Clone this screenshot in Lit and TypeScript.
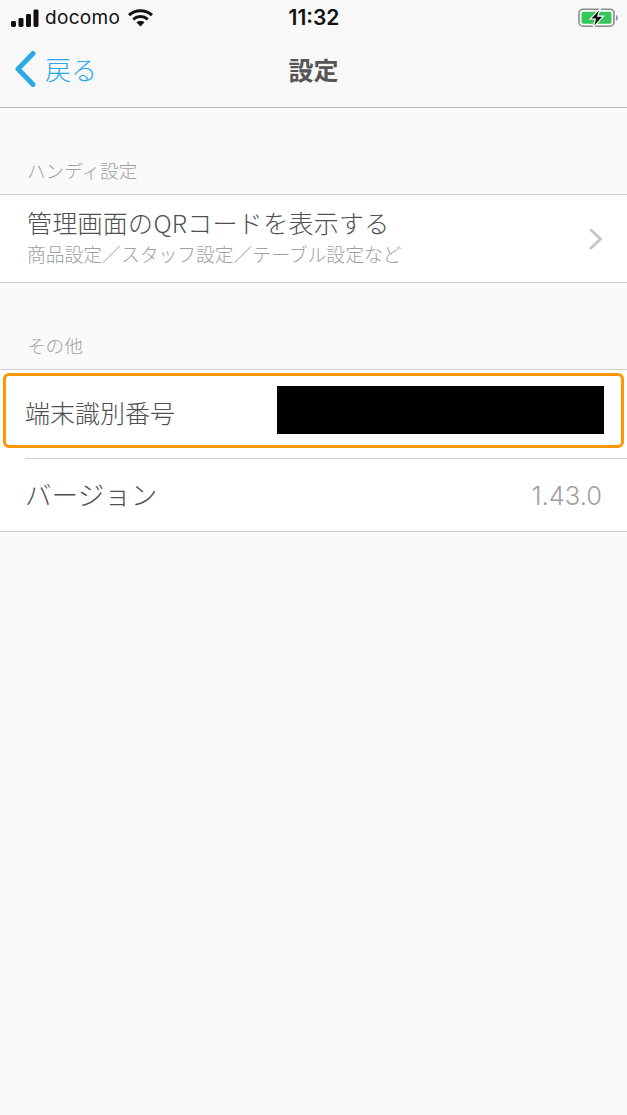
import { LitElement, html, css } from "lit";
import { customElement } from "lit/decorators.js";

@customElement("app-root")
export class AppRoot extends LitElement {
  static styles = css`
    :host {
      display: block;
      width: 627px;
      height: 1115px;
      background: #fafafa;
      overflow: hidden;
      font-family: "Noto Sans CJK JP", "Noto Sans", sans-serif;
      color: #555;
    }
    .header {
      height: 108px;
      box-sizing: border-box;
      background: #f8f8f9;
      border-bottom: 1px solid #bcbcbc;
      display: flex;
      flex-direction: column;
    }
    .status {
      height: 34px;
      flex: none;
      display: grid;
      grid-template-columns: 1fr auto 1fr;
      align-items: center;
      padding: 0 8px 0 11px;
      color: #111;
    }
    .status-left {
      display: flex;
      align-items: center;
      gap: 6px;
    }
    .carrier {
      font-family: "Inter", "Liberation Sans", sans-serif;
      font-size: 19px;
      line-height: 36px;
      letter-spacing: 0.3px;
    }
    .wifi {
      margin-left: 2px;
    }
    .clock {
      font-family: "Inter", "Liberation Sans", sans-serif;
      font-size: 21px;
      font-weight: 600;
      line-height: 34px;
      margin-left: -2px;
    }
    .status-right {
      display: flex;
      justify-content: flex-end;
    }
    .nav {
      flex: 1;
      display: grid;
      grid-template-columns: 1fr auto 1fr;
      align-items: center;
      padding: 0 15px 4px 15px;
    }
    .back {
      display: flex;
      align-items: center;
      gap: 9px;
      color: #2aa9ea;
      font-size: 26px;
      font-weight: 300;
      line-height: 36px;
    }
    .title {
      font-size: 25px;
      font-weight: 700;
      color: #555;
      line-height: 36px;
    }
    .section-label {
      height: 86px;
      box-sizing: border-box;
      display: flex;
      align-items: flex-end;
      padding: 0 0 12px 27px;
      font-size: 18.6px;
      font-weight: 300;
      line-height: 24px;
      color: #a0a0a0;
    }
    .group {
      background: #fff;
      border-top: 1px solid #cfcfcf;
      border-bottom: 1px solid #cfcfcf;
    }
    .qr {
      height: 87px;
      display: flex;
      align-items: center;
      justify-content: space-between;
      padding: 0 24px 0 27px;
    }
    .qr-title {
      font-size: 25px;
      font-weight: 300;
      line-height: 32px;
      letter-spacing: 0.28px;
      color: #4f4f4f;
      margin-top: -6px;
    }
    .qr-sub {
      font-size: 18.8px;
      font-weight: 300;
      line-height: 24px;
      color: #a0a0a0;
      margin-top: 4px;
    }
    .row {
      display: flex;
      align-items: center;
      justify-content: space-between;
      box-sizing: border-box;
      font-size: 25px;
      font-weight: 300;
      color: #4f4f4f;
    }
    .device {
      height: 88px;
      padding: 0 26px 0 25px;
      position: relative;
    }
    .highlight {
      position: absolute;
      left: 3px;
      right: 3px;
      top: 3px;
      height: 75px;
      border: 3px solid #ff9800;
      border-radius: 6px;
      box-sizing: border-box;
      pointer-events: none;
    }
    .mask {
      width: 327px;
      height: 48px;
      background: #000;
      margin-right: -3px;
      margin-top: -9px;
    }
    .device-label {
      margin-top: -5px;
    }
    .divider {
      height: 1px;
      margin-left: 25px;
      background: #cfcfcf;
    }
    .version {
      height: 72px;
      padding: 0 25px 0 25px;
    }
    .version-label {
      font-size: 26.6px;
      margin-top: -4px;
    }
    .version-value {
      font-family: "Inter", "Liberation Sans", sans-serif;
      font-size: 25.5px;
      font-weight: 300;
      color: #a0a0a0;
    }
  `;

  render() {
    return html`
      <div class="header">
        <div class="status">
          <div class="status-left">
            <svg width="28" height="18" viewBox="0 0 28 18">
              <rect x="0" y="12" width="5" height="6" rx="1.4" fill="#111" />
              <rect x="7.5" y="9" width="5" height="9" rx="1.4" fill="#111" />
              <rect x="15" y="5" width="5" height="13" rx="1.4" fill="#111" />
              <rect x="22.5" y="0.5" width="5" height="17.5" rx="1.4" fill="#111" />
            </svg>
            <span class="carrier">docomo</span>
            <svg class="wifi" width="25" height="18" viewBox="0 0 25 18">
              <path d="M1 6.2C7.4 0.4 17.6 0.4 24 6.2" fill="none" stroke="#111" stroke-width="3" />
              <path d="M5.2 10.3C9.4 6.6 15.6 6.6 19.8 10.3" fill="none" stroke="#111" stroke-width="3" />
              <path d="M12.5 17.5L8.4 13.3C10.6 11.5 14.4 11.5 16.6 13.3Z" fill="#111" />
            </svg>
          </div>
          <div class="clock">11:32</div>
          <div class="status-right">
            <svg width="41" height="20" viewBox="0 0 41 20">
              <rect x="1" y="1.200" width="35" height="17" rx="4" fill="none" stroke="#8c8c8c" stroke-width="1.6" />
              <rect x="3.500" y="3.700" width="30" height="12" rx="2" fill="#35c75a" />
              <path d="M38 7v6c1.200-.4 2-1.600 2-3s-.8-2.600-2-3z" fill="#9a9a9a" />
              <path d="M22.500 0.200L12 11.200H17.300L15 19.800L25.500 8.200H19.800Z" fill="#111" stroke="#f8f8f9" stroke-width="1.200" />
            </svg>
          </div>
        </div>
        <div class="nav">
          <div class="back">
            <svg width="21" height="36" viewBox="0 0 21 36">
              <path d="M18 2.500L3 18L18 33.500" fill="none" stroke="#2fa9e6" stroke-width="5" stroke-linecap="round" stroke-linejoin="round" />
            </svg>
            <span>戻る</span>
          </div>
          <div class="title">設定</div>
          <div></div>
        </div>
      </div>

      <div class="section-label">ハンディ設定</div>
      <div class="group">
        <div class="qr">
          <div>
            <div class="qr-title">管理画面のQRコードを表示する</div>
            <div class="qr-sub">商品設定／スタッフ設定／テーブル設定など</div>
          </div>
          <svg width="14" height="22" viewBox="0 0 14 22">
            <path d="M2 2L11.500 11L2 20" fill="none" stroke="#c6c6c6" stroke-width="3" stroke-linecap="round" stroke-linejoin="round" />
          </svg>
        </div>
      </div>

      <div class="section-label">その他</div>
      <div class="group">
        <div class="row device">
          <span class="device-label">端末識別番号</span>
          <div class="mask"></div>
          <div class="highlight"></div>
        </div>
        <div class="divider"></div>
        <div class="row version">
          <span class="version-label">バージョン</span>
          <span class="version-value">1.43.0</span>
        </div>
      </div>
    `;
  }
}
